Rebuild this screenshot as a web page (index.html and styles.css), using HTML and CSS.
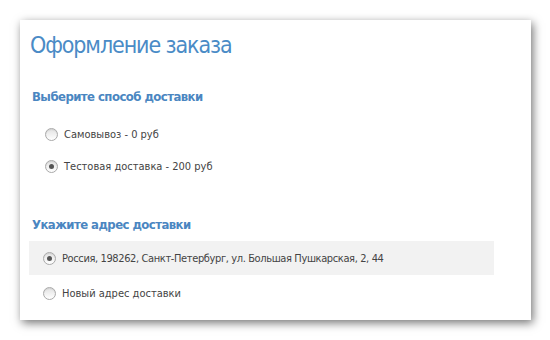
FILE: index.html
```html
<!DOCTYPE html>
<html lang="ru">
<head>
<meta charset="utf-8">
<link rel="stylesheet" href="styles.css">
</head>
<body>
<div class="card">
  <h1 class="title">Оформление заказа</h1>
  <h2 class="section-title first">Выберите способ доставки</h2>
  <div class="options">
    <label class="option"><span class="radio"></span>Самовывоз - 0 руб</label>
    <label class="option"><span class="radio checked"></span>Тестовая доставка - 200 руб</label>
  </div>
  <h2 class="section-title second">Укажите адрес доставки</h2>
  <div class="addresses">
    <label class="address selected"><span class="radio checked"></span><span class="addr-text">Россия, 198262, Санкт-Петербург, ул. Большая Пушкарская, 2, 44</span></label>
    <label class="address"><span class="radio"></span>Новый адрес доставки</label>
  </div>
</div>
</body>
</html>
```
FILE: styles.css
```css
html, body {
  margin: 0;
  padding: 0;
  background: #ffffff;
}
body {
  padding: 20px;
  font-family: "DejaVu Sans Condensed", "DejaVu Sans", sans-serif;
}
.card {
  width: 511px;
  height: 300px;
  box-sizing: border-box;
  background: #ffffff;
  box-shadow: 2px 3px 9px rgba(0, 0, 0, 0.55);
  padding: 10px 12px 0 10px;
  display: flex;
  flex-direction: column;
}
.title {
  margin: 0;
  font-size: 23px;
  line-height: 30px;
  letter-spacing: -1.1px;
  font-weight: normal;
  color: #4a8bc6;
}
.section-title {
  margin: 0;
  font-size: 13px;
  line-height: 16px;
  letter-spacing: -0.55px;
  font-weight: bold;
  color: #4a86c1;
}
.section-title.first { margin-top: 29px; padding-left: 2px; }
.section-title.second { margin-top: 35px; padding-left: 2px; }
.options {
  margin-top: 13px;
  display: flex;
  flex-direction: column;
  padding-left: 15px;
}
.option {
  height: 32px;
  display: flex;
  align-items: center;
  font-size: 11px;
  color: #444;
}
.addresses {
  margin-top: 8px;
  display: flex;
  flex-direction: column;
}
.address {
  height: 34px;
  display: flex;
  align-items: center;
  padding-left: 14px;
  margin-left: -1px;
  width: 465px;
  box-sizing: border-box;
  font-size: 11px;
  color: #444;
}
.addr-text {
  letter-spacing: -0.38px;
}
.address.selected {
  background: #f2f2f2;
}
.address + .address { height: 36px; }
.radio {
  width: 11px;
  height: 11px;
  border-radius: 50%;
  border: 1px solid #a9a9a9;
  background: linear-gradient(#e2e2e2, #ffffff);
  box-shadow: inset 0 1px 1px rgba(0,0,0,0.08);
  margin-right: 6px;
  position: relative;
  flex: none;
}
.radio.checked::after {
  content: "";
  position: absolute;
  left: 3px;
  top: 3px;
  width: 5px;
  height: 5px;
  border-radius: 50%;
  background: #555;
}
```
